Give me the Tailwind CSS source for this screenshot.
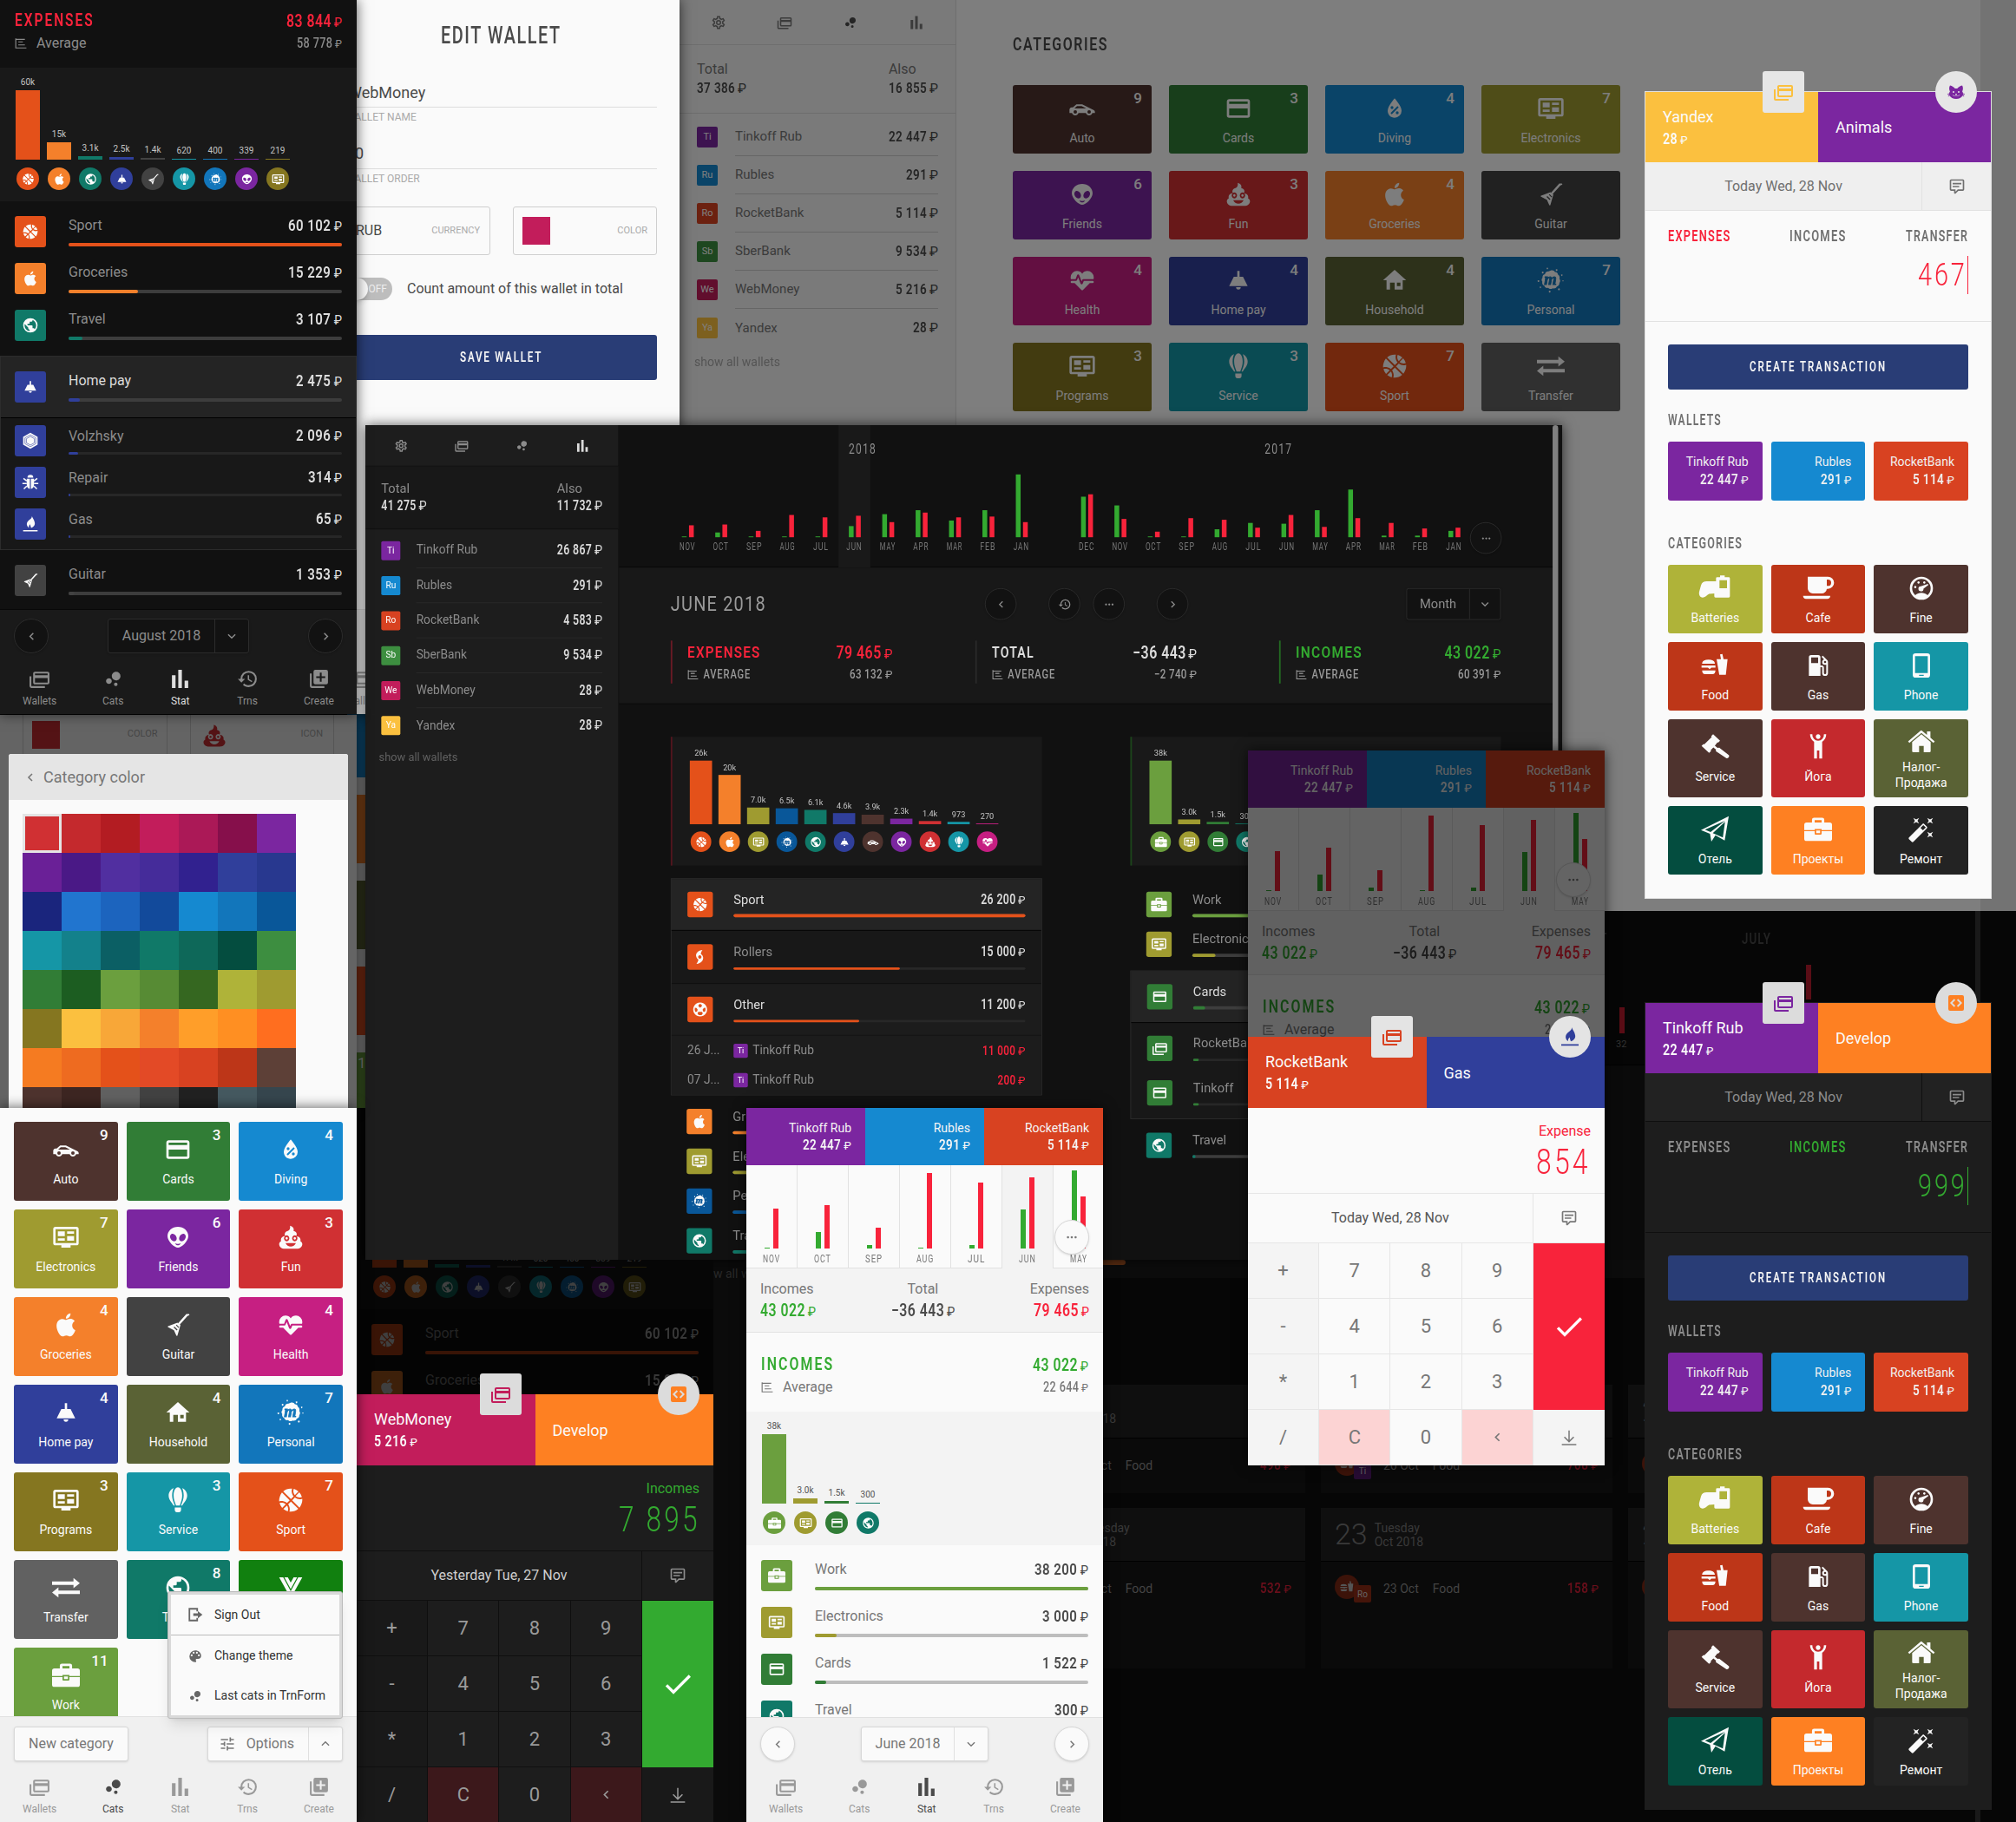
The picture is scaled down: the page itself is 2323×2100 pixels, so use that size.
<!DOCTYPE html>
<html lang="en">
<head>
<meta charset="utf-8">
<title>Finance app screens</title>
<script src="https://cdn.jsdelivr.net/npm/@tailwindcss/browser@4"></script>
</head>
<body class="bg-black font-['Roboto',sans-serif]">
<svg class="absolute size-0"><defs><mask id="mcut" maskUnits="userSpaceOnUse" x="0" y="0" width="24" height="24"><rect width="24" height="24" fill="white"/><text x="11.7" y="15.8" text-anchor="middle" font-family="Liberation Serif" font-style="italic" font-weight="bold" font-size="14" fill="black" stroke="black" stroke-width=".6">m</text></mask></defs></svg>
<div id="root" class="relative w-[2323px] h-[2100px] overflow-hidden bg-[#060606]"></div>
<script>
const p = d => `<path d="${d}"/>`;
const st = (d, w = 2) => `<path d="${d}" fill="none" stroke="currentColor" stroke-width="${w}"/>`;
// 24x24 icon set
const I = {
  gear: p('M12,8A4,4 0 0,1 16,12A4,4 0 0,1 12,16A4,4 0 0,1 8,12A4,4 0 0,1 12,8M12,10A2,2 0 0,0 10,12A2,2 0 0,0 12,14A2,2 0 0,0 14,12A2,2 0 0,0 12,10M10,22C9.75,22 9.54,21.82 9.5,21.58L9.13,18.93C8.5,18.68 7.96,18.34 7.44,17.94L4.95,18.95C4.73,19.03 4.46,18.95 4.34,18.73L2.34,15.27C2.21,15.05 2.27,14.78 2.46,14.63L4.57,12.97L4.5,12L4.57,11L2.46,9.37C2.27,9.22 2.21,8.95 2.34,8.73L4.34,5.27C4.46,5.05 4.73,4.96 4.95,5.05L7.44,6.05C7.96,5.66 8.5,5.32 9.13,5.07L9.5,2.42C9.54,2.18 9.75,2 10,2H14C14.25,2 14.46,2.18 14.5,2.42L14.87,5.07C15.5,5.32 16.04,5.66 16.56,6.05L19.05,5.05C19.27,4.96 19.54,5.05 19.66,5.27L21.66,8.73C21.79,8.95 21.73,9.22 21.54,9.37L19.43,11L19.5,12L19.43,13L21.54,14.63C21.73,14.78 21.79,15.05 21.66,15.27L19.66,18.73C19.54,18.95 19.27,19.04 19.05,18.95L16.56,17.95C16.04,18.34 15.5,18.68 14.87,18.93L14.5,21.58C14.46,21.82 14.25,22 14,22H10M11.25,4L10.88,6.61C9.68,6.86 8.62,7.5 7.85,8.39L5.44,7.35L4.69,8.65L6.8,10.2C6.4,11.37 6.4,12.64 6.8,13.8L4.68,15.36L5.43,16.66L7.86,15.62C8.63,16.5 9.68,17.14 10.87,17.38L11.24,20H12.76L13.13,17.39C14.32,17.14 15.37,16.5 16.14,15.62L18.57,16.66L19.32,15.36L17.2,13.81C17.6,12.64 17.6,11.37 17.2,10.2L19.31,8.65L18.56,7.35L16.15,8.39C15.38,7.5 14.32,6.86 13.12,6.62L12.75,4H11.25Z'),
  wallets: p('M21,8V6H7V8H21M21,16V11H7V16H21M21,4A2,2 0 0,1 23,6V16A2,2 0 0,1 21,18H7C5.89,18 5,17.1 5,16V6C5,4.89 5.89,4 7,4H21M3,20H18V22H3A2,2 0 0,1 1,20V9H3V20Z'),
  cats: p('M7.2,11.2C8.97,11.2 10.4,12.63 10.4,14.4C10.4,16.17 8.97,17.6 7.2,17.6C5.43,17.6 4,16.17 4,14.4C4,12.63 5.43,11.2 7.2,11.2M14.8,16A2,2 0 0,1 16.8,18A2,2 0 0,1 14.8,20A2,2 0 0,1 12.8,18A2,2 0 0,1 14.8,16M15.2,4A4.8,4.8 0 0,1 20,8.8C20,11.45 17.85,13.6 15.2,13.6A4.8,4.8 0 0,1 10.4,8.8C10.4,6.15 12.55,4 15.2,4Z'),
  stat: p('M3,22V8H7V22H3M10,22V2H14V22H10M17,22V14H21V22H17Z'),
  history: p('M13.5,8H12V13L16.28,15.54L17,14.33L13.5,12.25V8M13,3A9,9 0 0,0 4,12H1L4.96,16.03L9,12H6A7,7 0 0,1 13,5A7,7 0 0,1 20,12A7,7 0 0,1 13,19C11.07,19 9.32,18.21 8.06,16.94L6.64,18.36C8.27,20 10.5,21 13,21A9,9 0 0,0 22,12A9,9 0 0,0 13,3'),
  create: p('M19,11H15V15H13V11H9V9H13V5H15V9H19M20,2H8A2,2 0 0,0 6,4V16A2,2 0 0,0 8,18H20A2,2 0 0,0 22,16V4A2,2 0 0,0 20,2M4,6H2V20A2,2 0 0,0 4,22H18V20H4V6Z'),
  avg: st('M2 2V21H23M2 4H20M7 9H16M7 15H20'),
  comment: p('M9,22A1,1 0 0,1 8,21V18H4A2,2 0 0,1 2,16V4C2,2.89 2.9,2 4,2H20A2,2 0 0,1 22,4V16A2,2 0 0,1 20,18H13.9L10.2,21.71C10,21.9 9.75,22 9.5,22V22H9M10,16V19.08L13.08,16H20V4H4V16H10M6,7H18V9H6V7M6,11H15V13H6V11Z'),
  left: st('M15 6L9 12L15 18', 2.4), right: st('M9 6L15 12L9 18', 2.4), down: st('M5 9L12 16L19 9', 2.4), up: st('M5 15L12 8L19 15', 2.4),
  dots: p('M4.5 9.8a2.2 2.2 0 1 0 .01 0zM12 9.8a2.2 2.2 0 1 0 .01 0zM19.5 9.8a2.2 2.2 0 1 0 .01 0z'),
  check: p('M21,7L9,19L3.5,13.5L4.91,12.09L9,16.17L19.59,5.59L21,7Z'),
  download: st('M12 2V17M5.5 11L12 17.5L18.5 11M2 21.5H22', 1.8),
  auto: p('M12,8.5H7L4,11H3C1.89,11 1,11.89 1,13V16H3.17C3.6,17.2 4.73,18 6,18C7.27,18 8.4,17.2 8.82,16H15.17C15.6,17.2 16.73,18 18,18C19.27,18 20.4,17.2 20.82,16H23V15C23,13.89 21.97,13.53 21,13L12,8.5M5.25,12L7.5,10H11.5L15.5,12H5.25M6,13.5A1.5,1.5 0 0,1 7.5,15A1.5,1.5 0 0,1 6,16.5A1.5,1.5 0 0,1 4.5,15A1.5,1.5 0 0,1 6,13.5M18,13.5A1.5,1.5 0 0,1 19.5,15A1.5,1.5 0 0,1 18,16.5A1.5,1.5 0 0,1 16.5,15A1.5,1.5 0 0,1 18,13.5Z'),
  cards: p('M20,8H4V6H20M20,18H4V12H20M20,4H4C2.89,4 2,4.89 2,6V18A2,2 0 0,0 4,20H20A2,2 0 0,0 22,18V6C22,4.89 21.1,4 20,4Z'),
  diving: p('M12,3.25C12,3.25 6,10 6,14C6,17.32 8.69,20 12,20A6,6 0 0,0 18,14C18,10 12,3.25 12,3.25M14.47,9.97L15.53,11.03L9.53,17.03L8.47,15.97M9.75,10A1.25,1.25 0 0,1 11,11.25A1.25,1.25 0 0,1 9.75,12.5A1.25,1.25 0 0,1 8.5,11.25A1.25,1.25 0 0,1 9.75,10M14.25,14.5A1.25,1.25 0 0,1 15.5,15.75A1.25,1.25 0 0,1 14.25,17A1.25,1.25 0 0,1 13,15.75A1.25,1.25 0 0,1 14.25,14.5Z'),
  electronics: p('M21 3H3a2 2 0 0 0-2 2v12a2 2 0 0 0 2 2h5v2h8v-2h5a2 2 0 0 0 2-2V5a2 2 0 0 0-2-2zM21 17H3V5h18zM5 7h6v4H5zM13 7h6v2h-6zM13 11h6v4h-6zM5 13h6v2H5z'),
  friends: p('M12,3C16.97,3 21,6.58 21,11C21,15.42 15,21 12,21C9,21 3,15.42 3,11C3,6.58 7.03,3 12,3M10.31,10.93C9.29,9.29 7.47,8.58 6.25,9.34C5.03,10.1 4.87,12.05 5.89,13.69C6.92,15.33 8.74,16.04 9.96,15.28C11.18,14.5 11.33,12.57 10.31,10.93M13.69,10.93C12.67,12.57 12.82,14.5 14.04,15.28C15.26,16.04 17.08,15.33 18.11,13.69C19.13,12.05 18.97,10.1 17.75,9.34C16.53,8.58 14.71,9.29 13.69,10.93M12,17.75C10,17.75 9.5,17 9.5,17C9.5,17.03 10,19 12,19C14,19 14.5,17 14.5,17C14.5,17 14,17.75 12,17.75Z'),
  fun: p('M11.4 2c2 .4 3.4 1.8 3.2 3.6 0 .4-.1.7-.2 1 1.6.2 2.8 1.3 2.8 2.8 0 .6-.2 1.1-.5 1.6C19 11.100 20.500 12.500 20.500 14.300c0 .4-.1.8-.2 1.100C21.400 16 22 17 22 18c0 2.200-2 4-5 4H7c-3 0-5-1.800-5-4 0-1 .6-2 1.700-2.600-.1-.3-.2-.7-.2-1.100 0-1.800 1.500-3.200 3.700-3.400-.3-.5-.4-1-.4-1.500C6.800 7.800 8 6.800 9.500 6.500 11 6.200 11.800 4.500 11.400 2zM8.500 10.300a2.300 2.600 0 1 0 .01 0zM15.500 10.300a2.300 2.600 0 1 0 .01 0zM8.500 11.900a1 1.100 0 1 1-.01 0zM15.500 11.900a1 1.100 0 1 1-.01 0zM7.500 17c1 2 2.500 3 4.500 3s3.500-1 4.500-3z'),
  groceries: p('M18.71,19.5C17.88,20.74 17,21.95 15.66,21.97C14.32,22 13.89,21.18 12.37,21.18C10.84,21.18 10.37,21.95 9.1,22C7.79,22.05 6.8,20.68 5.96,19.47C4.25,17 2.94,12.45 4.7,9.39C5.57,7.87 7.13,6.91 8.82,6.88C10.1,6.86 11.32,7.75 12.11,7.75C12.89,7.75 14.37,6.68 15.92,6.84C16.57,6.87 18.39,7.1 19.56,8.82C19.47,8.88 17.39,10.1 17.41,12.63C17.44,15.65 20.06,16.66 20.09,16.67C20.06,16.74 19.67,18.11 18.71,19.5M13,3.5C13.73,2.67 14.94,2.04 15.94,2C16.07,3.17 15.6,4.35 14.9,5.19C14.21,6.04 13.07,6.7 11.95,6.61C11.8,5.46 12.36,4.26 13,3.5Z'),
  guitar: p('M19.300 2.600h2.300l.4.900-1.700.9-6.600 7.300.5.500-2.600 8.900c-.2.600-.8.600-1 .1l-2-4.600-5-2.500c-.5-.3-.5-.8 0-1l8-2.900.5.500zM8.300 14.200l2.700 2.700.7-.7L9 13.500zM10.300 12.400l2.200 2.200.6-.6-2.200-2.200z'),
  health: p('M7.5,4A5.5,5.5 0 0,0 2,9.5C2,10 2.09,10.5 2.22,11H6.3L7.57,7.63C7.87,6.83 9.05,6.75 9.43,7.63L11.5,13L12.09,11.58C12.22,11.25 12.57,11 13,11H21.78C21.91,10.5 22,10 22,9.5A5.5,5.5 0 0,0 16.5,4C14.64,4 13,4.93 12,6.34C11,4.93 9.36,4 7.5,4V4M3,12.5A1,1 0 0,0 2,13.5A1,1 0 0,0 3,14.5H5.44L11,20C12,20.9 12,20.9 13,20L18.56,14.5H21A1,1 0 0,0 22,13.5A1,1 0 0,0 21,12.5H13.4L12.47,14.8C12.07,15.81 10.92,15.67 10.55,14.83L8.5,9.5L7.54,11.83C7.39,12.21 7.05,12.5 6.6,12.5H3Z'),
  homepay: p('M8,9H11V4H13V9H16L20,17H4L8,9M14,18A2,2 0 0,1 12,20A2,2 0 0,1 10,18H14Z'),
  household: p('M12 3L2 12H5V20H8V14H12V20H19V12H22zM14 14h3v3h-3z'),
  personal: `<g mask="url(#mcut)"><path d="M12 3.500c1.500-.6 3 .1 3.600 1.300 1.500 0 2.700 1.200 2.700 2.600 1.200.7 1.600 2.100 1.100 3.300.9 1.100.9 2.600 0 3.600.2 1.500-.8 2.800-2.200 3.100-.6 1.400-2.200 2-3.600 1.500-1.200 1-3 .8-3.900-.3-1.500.4-3-.5-3.400-1.900C4.900 16.200 4.200 14.700 4.700 13.400c-.9-1-.8-2.600.1-3.500-.2-1.500.7-2.900 2.100-3.200C7.300 5.200 8.700 4.200 10.200 4.400c.5-.5 1.100-.8 1.800-.9z"/></g><path d="M5 4.500a.8.8 0 1 0 .01 0zM9 1.200a.6.6 0 1 0 .01 0zM17 2.500a.7.7 0 1 0 .01 0zM21.500 7a.6.6 0 1 0 .01 0zM22.500 12a.5.500 0 1 0 .01 0zM1.300 12a.7.7 0 1 0 .01 0zM3 17.500a.6.6 0 1 0 .01 0zM11 21a.8.8 0 1 0 .01 0zM19 19a.8.8 0 1 0 .01 0z"/>`,
  service: p('M8.300 1.600C5.800 2.600 4 5 4 8c0 3.500 2.600 6 4.300 8.600h1C7.800 13 7 10.500 7 8c0-2.600.5-4.800 1.300-6.400zM15.700 1.600C18.200 2.600 20 5 20 8c0 3.500-2.600 6-4.300 8.600h-1C16.200 13 17 10.500 17 8c0-2.600-.5-4.800-1.300-6.400zM12 1c2.300 0 3.700 3.300 3.700 7 0 3-1 5.600-2.100 8.600h-3.200C9.300 13.600 8.300 11 8.300 8c0-3.700 1.400-7 3.700-7zM9.300 18.300h5.400v2.200c0 1.100-.7 2-1.900 2h-1.600c-1.200 0-1.900-.9-1.900-2z'),
  sport: p('M2.34,14.63C2.94,14.41 3.56,14.3 4.22,14.3C5.56,14.3 6.73,14.72 7.73,15.56L4.59,18.7C3.53,17.5 2.78,16.13 2.34,14.63M15.56,9.8C17.53,11.27 19.66,11.63 21.94,10.88C21.97,11.09 22,11.47 22,12C22,13.03 21.75,14.18 21.28,15.45C20.81,16.72 20.23,17.73 19.55,18.5L13.22,12.19L15.56,9.8M8.77,16.64C9.83,18.17 10.05,19.84 9.42,21.66C8,21.25 6.73,20.61 5.61,19.73L8.77,16.64M12.19,13.22L18.5,19.55C16.33,21.45 13.78,22.25 10.88,21.94C11.09,21.28 11.2,20.56 11.2,19.78C11.2,19.16 11.06,18.43 10.78,17.6C10.5,16.77 10.17,16.09 9.8,15.56L12.19,13.22M8.81,14.5C7.88,13.67 6.8,13.15 5.58,12.91C4.36,12.68 3.19,12.75 2.06,13.13C2.03,12.91 2,12.53 2,12C2,10.97 2.25,9.82 2.72,8.55C3.19,7.28 3.77,6.27 4.45,5.5L11.11,12.19L8.81,14.5M15.56,7.73C14.22,6.08 13.91,4.28 14.63,2.34C15.25,2.5 15.96,2.8 16.76,3.26C17.55,3.71 18.2,4.16 18.7,4.59L15.56,7.73M21.66,9.38C21.06,9.59 20.44,9.7 19.78,9.7C18.44,9.7 17.27,9.28 16.27,8.44L19.41,5.3C20.44,6.53 21.19,7.89 21.66,9.38M12.19,11.11L5.5,4.45C7.67,2.55 10.22,1.75 13.13,2.06C12.91,2.72 12.8,3.44 12.8,4.22C12.8,4.94 12.96,5.75 13.29,6.66C13.62,7.56 14,8.28 14.5,8.81L12.19,11.11Z'),
  transfer: p('M0 6.500H18.500V3.500L24 8L18.500 12.300V9.500H0zM24 14.500H5.500V11.700L0 16.200L5.500 20.500V17.500H24z'),
  travel: p('M17.9,17.39C17.64,16.59 16.89,16 16,16H15V13A1,1 0 0,0 14,12H8V10H10A1,1 0 0,0 11,9V7H13A2,2 0 0,0 15,5V4.59C17.93,5.77 20,8.64 20,12C20,14.08 19.2,15.97 17.9,17.39M11,19.93C7.05,19.44 4,16.08 4,12C4,11.38 4.08,10.78 4.21,10.21L9,15V16A2,2 0 0,0 11,18M12,2A10,10 0 0,0 2,12A10,10 0 0,0 12,22A10,10 0 0,0 22,12A10,10 0 0,0 12,2Z'),
  work: p('M8.500 1.800h7a1.800 1.800 0 0 1 1.800 1.800V6H22a2 2 0 0 1 2 2v4.500H15v-.8H9v.8H0V8a2 2 0 0 1 2-2h4.700V3.600A1.800 1.800 0 0 1 8.500 1.800zM9 6h6V4H9zM0 13.500h9v2.300c0 .4.3.7.7.7h4.600c.4 0 .7-.3.7-.7v-2.300h9V20a2 2 0 0 1-2 2H2a2 2 0 0 1-2-2zM10.300 13h3.400v2.200h-3.400z'),
  vue: p('M2,3H5.5L12,15L18.5,3H22L12,21L2,3M6.5,3H9.5L12,7.58L14.5,3H17.5L12,13.08L6.5,3Z'),
  volzhsky: p('M12 1L22 6.500V17.500L12 23L2 17.500V6.500z') + `<g fill="none" stroke="#303f9b" stroke-width=".7"><path d="M12 3.800L19.500 8V16L12 20.200L4.500 16V8zM12 6L17.500 9.200V14.800L12 18L6.500 14.800V9.200z"/></g>`,
  bug: p('M8 5.500a4 4 0 0 1 8 0zM7 7h4.300v14C8.800 21 7 18.500 7 16zM12.700 7H17v9c0 2.500-1.800 5-4.300 5z') + st('M7 10L2.500 6.500M17 10L21.500 6.500M7 13.500H1M17 13.500H23M7 17L3 21M17 17L21 21', 1.8),
  fire: p('M14 1c1 3.500-5 5.500-6.500 9-1.200 3.200.5 6 2.500 7-.5-2 .5-3.500 1.800-4.600 0 1.800.7 2.600 1.200 4.900 3.600-1.100 5.800-4 5-7.300C17.400 6.500 15.500 4.500 14 1zM2 20.500H22V22.300H2z'),
  rollers: p('M15.500 1.500C9 2 5 6.500 6 11c.5 2.500 2 4 3.500 5-.5 2.500-1.500 4.500-3 6.500 7-1 10.500-5.500 10-10-.3-2.500-2-4-3.500-5 .3-2.500 1-4 2.500-6zM11.500 9.500a2.500 2.500 0 1 1-.01 0z'),
  soccer: p('M12 1.500a10.500 10.500 0 1 0 .01 0zM12 3.500L14.500 5V7.500L12 9.300L9.500 7.500V5zM4 9.500L6.500 9.800L8.300 12.200L7.300 15.200L4.800 15.500A8.500 8.500 0 0 1 4 9.500zM20 9.500L17.500 9.800L15.700 12.200L16.700 15.200L19.200 15.500A8.500 8.500 0 0 0 20 9.500zM9.200 15.500H14.800L16 18L14.500 20.200A8.800 8.800 0 0 1 9.500 20.200L8 18z'),
  cat: p('M12,8L10.67,8.09C9.81,7.07 7.4,4.5 5,4.5C5,4.5 3.03,7.46 4.96,11.41C4.41,12.24 4.07,12.67 4,13.66L2.07,13.95L2.28,14.93L4.04,14.67L4.18,15.38L2.61,16.32L3.08,17.21L4.53,16.32C5.68,18.76 8.59,20 12,20C15.41,20 18.32,18.76 19.47,16.32L20.92,17.21L21.39,16.32L19.82,15.38L19.96,14.67L21.72,14.93L21.93,13.95L20,13.66C19.93,12.67 19.59,12.24 19.04,11.41C20.97,7.46 19,4.5 19,4.5C16.6,4.5 14.19,7.07 13.33,8.09L12,8M9,11A1,1 0 0,1 10,12A1,1 0 0,1 9,13A1,1 0 0,1 8,12A1,1 0 0,1 9,11M15,11A1,1 0 0,1 16,12A1,1 0 0,1 15,13A1,1 0 0,1 14,12A1,1 0 0,1 15,11M11,14H13L12.3,15.39C12.5,16.03 13.06,16.5 13.75,16.5A1.5,1.5 0 0,0 15.25,15H15.75A2,2 0 0,1 13.75,17C13,17 12.35,16.59 12,16V16H12C11.65,16.59 11,17 10.25,17A2,2 0 0,1 8.25,15H8.75A1.5,1.5 0 0,0 10.25,16.5C10.94,16.5 11.5,16.03 11.7,15.39L11,14Z'),
  develop: p('M5 3h14a2 2 0 0 1 2 2v14a2 2 0 0 1-2 2H5a2 2 0 0 1-2-2V5a2 2 0 0 1 2-2zM9.700 7.300L5 12L9.700 16.700L11.100 15.300L7.800 12L11.100 8.700zM14.300 7.300L12.900 8.700L16.200 12L12.900 15.300L14.300 16.700L19 12z'),
  batteries: p('M14.500 2.500h2V1h4v1.500H24a1 1 0 0 1 1 1V19a1 1 0 0 1-1 1H12.500a1 1 0 0 1-1-1v-2.500l-4.500.3C5 18 3.500 20 1.500 20-1 20-2 17.500-1.500 15L0 9.500C.7 7 2.500 6 5 6h8V3.500a1 1 0 0 1 1-1zM16 5h6.500v7H16z'),
  cafe: p('M3 2h17.500a5 5 0 0 1 0 10.500H19.500A4.500 4.500 0 0 1 15 16.500H7.500A4.500 4.500 0 0 1 3 12zM19.500 4.500v5.500h1a2.700 2.700 0 0 0 0-5.500zM-1 18.500H22.500c0 1.500-1 2.700-2.500 2.700H1.500C0 21.200-1 20-1 18.500z'),
  fine: p('M12,2A10,10 0 0,0 2,12A10,10 0 0,0 12,22A10,10 0 0,0 22,12A10,10 0 0,0 12,2M12,4A8,8 0 0,1 20,12C20,14.4 19,16.5 17.3,18C15.9,16.7 14,16 12,16C10,16 8.2,16.7 6.7,18C5,16.5 4,14.4 4,12A8,8 0 0,1 12,4') + p('M11.500 10.300L17.600 8.200L18 9.200L13.800 12.300A2.200 2.200 0 1 1 11.500 10.300zM9.500 6a1 1 0 1 0 .01 0zM14.500 6a1 1 0 1 0 .01 0zM6.700 10a1 1 0 1 0 .01 0z'),
  food: p('M1 10.500c0-2.200 2-3.500 5.500-3.500S12 8.300 12 10.500zM.5 12h12v1.800H9l-1.500 1.300L6 13.800H.5zM1 16.300h11.500c0 2-1 3.200-2.500 3.200H3.500C2 19.500 1 18.300 1 16.300zM13.500 6.500h3.800L16.500 2.500l2-.5 1 4.500H23L21.500 20h-5.700z'),
  gas: p('M18,10A1,1 0 0,1 17,9A1,1 0 0,1 18,8A1,1 0 0,1 19,9A1,1 0 0,1 18,10M12,10H6V5H12M19.77,7.23L19.78,7.22L16.06,3.5L15,4.56L17.11,6.67C16.17,7 15.5,7.93 15.5,9A2.5,2.5 0 0,0 18,11.5C18.36,11.5 18.69,11.42 19,11.29V18.5A1,1 0 0,1 18,19.5A1,1 0 0,1 17,18.5V14A2,2 0 0,0 15,12H14V5A2,2 0 0,0 12,3H6A2,2 0 0,0 4,5V21H14V13.5H15.5V18.5A2.5,2.5 0 0,0 18,21A2.5,2.5 0 0,0 20.5,18.5V9C20.5,8.31 20.22,7.68 19.77,7.23Z'),
  phone: p('M7 1.500h10a2.500 2.500 0 0 1 2.500 2.500V20A2.500 2.500 0 0 1 17 22.500H7A2.500 2.500 0 0 1 4.500 20V4A2.500 2.500 0 0 1 7 1.500zM6.500 4V18.500H17.500V4zM10 20h4v1h-4z'),
  gavel: p('M10.500 1L16.500 6.500L14.800 8.200L14.300 7.800L12 10.800L14.300 12.800L15.800 12.500L24 19C25 20 23.500 22.500 21.800 21.500L12.800 15.500L13 14.300L10.700 12.400L8.300 14.800L8.800 15.300L7 17L.5 11L2.200 9.300L2.800 9.800L9.300 3.300L8.800 2.700z'),
  yoga: p('M5,1C5,3.7 6.3,6.160 8.500,7.500V22H11V15H13V22H15.500V7.500C17.700,6.160 19,3.7 19,1H17A5,5 0 0,1 12,6.500A5,5 0 0,1 7,1M12,1C10.89,1 10,1.89 10,3C10,4.11 10.89,5 12,5C13.11,5 14,4.11 14,3C14,1.89 13.11,1 12,1Z'),
  house: p('M12 5.500L20 12.200V20a1 1 0 0 1-1 1h-5v-5.500h-4V21H5a1 1 0 0 1-1-1v-7.800zM12 2L16.800 6V3h3v5.500L23.500 11.600L22.400 13L12 4.300L1.600 13L.5 11.600L11 2.700z'),
  plane: p('M24 .5L20.500 21.500L12.500 17L9 22.500L7.800 15.800L0 12.500zM20.800 4.500L3.500 12.200L8.300 14.300zM20.800 5.500L10.200 15.200L18.900 19z'),
  wand: p('M7.5,5.6L5,7L6.4,4.5L5,2L7.5,3.4L10,2L8.6,4.5L10,7L7.5,5.6M19.5,15.4L22,14L20.6,16.5L22,19L19.5,17.6L17,19L18.4,16.5L17,14L19.500,15.400M22,2L20.600,4.500L22,7L19.500,5.600L17,7L18.400,4.500L17,2L19.500,3.400L22,2M13.340,12.780L15.780,10.340L13.660,8.220L11.220,10.660L13.340,12.780M14.370,7.290L16.710,9.630C17.100,10 17.100,10.650 16.710,11.040L5.040,22.710C4.650,23.100 4,23.100 3.630,22.710L1.290,20.370C.9,20 .9,19.350 1.290,18.960L12.960,7.290C13.350,6.900 14,6.900 14.370,7.290Z'),
  palette: p('M17.5,12A1.5,1.5 0 0,1 16,10.5A1.5,1.5 0 0,1 17.5,9A1.5,1.5 0 0,1 19,10.5A1.5,1.5 0 0,1 17.5,12M14.5,8A1.5,1.5 0 0,1 13,6.5A1.5,1.5 0 0,1 14.5,5A1.5,1.5 0 0,1 16,6.5A1.5,1.5 0 0,1 14.5,8M9.5,8A1.5,1.5 0 0,1 8,6.5A1.5,1.5 0 0,1 9.5,5A1.5,1.5 0 0,1 11,6.5A1.5,1.5 0 0,1 9.5,8M6.5,12A1.5,1.5 0 0,1 5,10.5A1.5,1.5 0 0,1 6.5,9A1.5,1.5 0 0,1 8,10.5A1.5,1.5 0 0,1 6.5,12M12,3A9,9 0 0,0 3,12A9,9 0 0,0 12,21A1.5,1.5 0 0,0 13.5,19.5C13.5,19.11 13.35,18.76 13.11,18.5C12.88,18.23 12.73,17.88 12.73,17.5A1.5,1.5 0 0,1 14.23,16H16A5,5 0 0,0 21,11C21,6.58 16.97,3 12,3Z'),
  tune: p('M3,17V19H9V17H3M3,5V7H13V5H3M13,21V19H21V17H13V15H11V21H13M7,9V11H3V13H7V15H9V9H7M21,13V11H11V13H21M15,9H17V7H21V5H17V3H15V9Z'),
  logout: st('M15 7V3H3V21H15V17', 2.4) + p('M9 10H16V6.500L23 12L16 17.500V14H9z'),
};
const ic = (n, c = 'size-8') => `<svg class="${c} shrink-0 overflow-visible" viewBox="0 0 24 24" fill="currentColor" fill-rule="evenodd">${I[n]}</svg>`;
// Narrow display text: squeezed to a ratio (default) or to an explicit width in px.
const U = (t, c = '', w = 0) => `<span class="nar inline-block whitespace-pre origin-left ${c.includes('font-') ? '' : 'font-semibold'} ${c}" data-w="${w}">${t}</span>`;
const M = (v, c = 'text-[19px]', r = 'text-[14px]') => `<span class="inline-flex items-baseline gap-[3px] whitespace-nowrap">${U(v, c + ' tracking-[.03em]')}<span class="${r}">₽</span></span>`;

const C = { sport: 'bg-[#e4511a]', groceries: 'bg-[#f4802b]', travel: 'bg-[#107968]', homepay: 'bg-[#303f9b]', guitar: 'bg-[#424242]', service: 'bg-[#1596a6]', personal: 'bg-[#1276bb]', personal2: 'bg-[#095799]', friends: 'bg-[#7b26a0]', programs: 'bg-[#857620]', electronics: 'bg-[#9f9b30]', auto: 'bg-[#4e332e]', fun: 'bg-[#d03033]', health: 'bg-[#c61f82]', work: 'bg-[#6b9f3e]', cards: 'bg-[#317d36]', diving: 'bg-[#1589d0]', household: 'bg-[#5a6235]', transfer: 'bg-[#616161]', vue: 'bg-[#11800f]', amber: 'bg-[#fbc03f]', orange: 'bg-[#fe8022]', tomato: 'bg-[#d84221]', pink: 'bg-[#c21d5b]', lime: 'bg-[#afb339]', brick: 'bg-[#bd3618]', red: 'bg-[#c4292d]', deep: 'bg-[#044d3f]', ink: 'bg-[#232323]', green: 'bg-[#3d8e40]' };
const DK = { bg: 'bg-[#111111]', alt: 'bg-[#191919]', mut: 'text-[#8c8c8c]', txt: 'text-[#dcdcdc]', track: 'bg-[#3d3d3d]', track2: 'bg-[#272727]', bar: 'bg-[#1a1a1a]', line: 'border-[#080808]', btn: 'bg-[#121212] border-[#2c2c2c]', nav: 'text-[#8c8c8c]', navOn: 'text-[#dedede]', line2: 'border-[#2c2c2c]', lab: 'text-[#c4c4c4]' };
const LT = { bg: 'bg-[#fafafa]', alt: 'bg-[#f3f3f3]', mut: 'text-[#777777]', txt: 'text-[#4a4a4a]', track: 'bg-[#bdbdbd]', track2: 'bg-[#dddddd]', bar: 'bg-[#f0f0f0]', line: 'border-[#e0e0e0]', btn: 'bg-[#fafafa] border-[#d8d8d8]', nav: 'text-[#999999]', navOn: 'text-[#4a4a4a]', line2: 'border-[#e0e0e0]', lab: 'text-[#555555]' };

const nav = (t, on) => `<div class="flex justify-between px-[26px] pt-[17px]">${[['wallets', 'Wallets'], ['cats', 'Cats'], ['stat', 'Stat'], ['history', 'Trns'], ['create', 'Create']].map(([i, l]) => `<div class="flex flex-col items-center ${on === l ? t.navOn : t.nav}">${ic(i, 'size-[25px]')}<div class="mt-1 text-[12px] leading-[18px]">${l}</div></div>`).join('')}</div>`;
const circ = (t, i, s = 'size-[15px]') => `<div class="flex size-10 items-center justify-center rounded-full border shadow-sm ${t.btn} ${t.mut}">${ic(i, s)}</div>`;
const select = (t, l, i = 'down') => `<div class="flex h-10 rounded-[3px] border shadow-sm ${t.btn} ${t.mut}"><div class="flex items-center px-4 text-[16px]">${l}</div><div class="flex w-[39px] items-center justify-center border-l ${t.line2}">${ic(i, 'size-[14px]')}</div></div>`;
const bottomBar = (t, mid, on) => `<div class="absolute inset-x-0 bottom-0 h-[121px] border-t pt-[10px] ${t.bar} ${t.line}"><div class="flex h-10 justify-between px-4">${mid}</div>${nav(t, on)}</div>`;

// Category bar chart: [label, height, category, icon]
const chart = (t, bars, pad = 'h-[154px] px-[18px]', top = 'h-[106px]') => `<div class="${pad} ${t.alt}"><div class="flex items-end gap-2 ${top}">${bars.map(([l, h, c]) => `<div class="flex w-7 flex-col items-center"><div class="text-[10px] leading-[19px] ${t.lab}">${l}</div><div class="w-7 ${C[c]}" style="height:${h}px"></div></div>`).join('')}</div><div class="flex gap-2 pt-[9px]">${bars.map(([, , c, i]) => `<div class="flex w-7 justify-center"><div class="flex size-[26px] items-center justify-center rounded-full text-white ${C[c]}">${ic(i || c, 'size-[15px]')}</div></div>`).join('')}</div></div>`;
// Category row: name, sum, percent, category, icon
const row = (t, [n, v, pc, c, i], o = {}) => `<div class="flex items-center ${o.h || 'h-[54px] px-[17px]'}"><div class="flex items-center justify-center rounded-[3px] text-[#fafafa] ${o.box || 'size-9 mr-[26px]'} ${C[c]}">${ic(i || c, 'size-5')}</div><div class="flex flex-1 flex-col justify-between ${o.body || 'h-[34px]'}"><div class="flex h-5 items-center justify-between"><span class="text-[16px] ${o.on ? t.txt : t.mut}">${n}</span><span class="${t.txt}">${M(v, o.num || 'text-[19px]', o.rub || 'text-[14px]')}</span></div><div class="w-full rounded-full ${o.thin ? 'h-[3px] ' + t.track2 : 'h-1 ' + t.track}"><div class="h-full rounded-full ${C[c]}" style="width:${pc}%"></div></div></div></div>`;
const sect = (t, title, w, col, sum, avg) => `<div class="h-[78px] px-[17px] pt-[11px] ${t.bg}"><div class="flex h-[26px] items-center justify-between ${col}">${U(title, 'text-[21px] tracking-[.13em] font-semibold', w + 2)}${M(sum, 'text-[20px]')}</div><div class="flex h-[26px] items-center justify-between ${t.mut}"><div class="flex items-center gap-[11px] text-[16px]">${ic('avg', 'size-[14px]')}Average</div>${M(avg, 'text-[16px] font-medium', 'text-[12px]')}</div></div>`;

const RED = 'text-[#f8233b]', GRN = 'text-[#33aa30]';
const statDark = () => `<div class="relative h-[823px] w-[411px] overflow-hidden ${DK.bg}">
${sect(DK, 'EXPENSES', 90, RED, '83 844', '58 778')}
${chart(DK, [['60k', 80, 'sport'], ['15k', 20, 'groceries'], ['3.1k', 4, 'travel'], ['2.5k', 3, 'homepay'], ['1.4k', 2, 'guitar'], ['620', 1, 'service'], ['400', 1, 'personal'], ['339', 1, 'friends'], ['219', 1, 'programs', 'electronics']])}
<div class="pt-2">${row(DK, ['Sport', '60 102', 100, 'sport'])}${row(DK, ['Groceries', '15 229', 25.4, 'groceries'])}${row(DK, ['Travel', '3 107', 5, 'travel'])}</div>
<div class="mt-2 border bg-[#181818] border-[#2c2c2c]"><div class="border-b border-black bg-[#242424] py-2">${row(DK, ['Home pay', '2 475', 4.1, 'homepay'], { on: 1, h: 'h-[54px] px-4' })}</div>
<div class="pt-[2px] pb-[5px]">${[['Volzhsky', '2 096', 3.5, 'homepay', 'volzhsky'], ['Repair', '314', .6, 'homepay', 'bug'], ['Gas', '65', .6, 'homepay', 'fire']].map(r => row(DK, r, { thin: 1, h: 'h-12 px-4', body: 'h-[31px]' })).join('')}</div></div>
<div class="pt-2">${row(DK, ['Guitar', '1 353', 2.2, 'guitar'])}</div>
${bottomBar(DK, circ(DK, 'left') + select(DK, 'August 2018') + circ(DK, 'right'), 'Stat')}</div>`;

const WAL = [['Tinkoff Rub', '22 447', 'friends'], ['Rubles', '291', 'diving'], ['RocketBank', '5 114', 'tomato']];
const statLight = () => `<div class="relative h-[823px] w-[411px] overflow-hidden ${LT.bg}">
<div class="grid h-[66px] grid-cols-3">${WAL.map(([n, v, c]) => `<div class="flex flex-col items-end pt-[13px] pr-4 text-[#f5f5f5] ${C[c]}"><div class="h-5 text-[14px] leading-5">${n}</div><div class="flex h-5 items-center">${M(v, 'text-[17px]', 'text-[13px]')}</div></div>`).join('')}</div>
<div class="relative flex h-[119px]">${[['NOV', 1, 46], ['OCT', 19, 50], ['SEP', 4, 24], ['AUG', 1, 87], ['JUL', 4, 76], ['JUN', 45, 82], ['MAY', 90, 60]].map(([m, g, r]) => `<div class="flex w-[59px] shrink-0 flex-col items-center ${m === 'JUN' ? 'bg-[#f3f3f3]' : 'border-b'} border-r border-[#e2e2e2]"><div class="flex h-24 shrink-0 items-end gap-1"><div class="w-1.5 bg-[#33aa30]" style="height:${g}px"></div><div class="w-1.5 bg-[#f8233b]" style="height:${r}px"></div></div><div class="mt-1 flex h-4 items-center text-[#777]">${U(m, 'text-[12px] leading-4 font-normal tracking-[.1em]', 20)}</div></div>`).join('')}
<div class="absolute top-[63px] left-[355px]">${circ(LT, 'dots', 'size-[14px]')}</div></div>
<div class="flex h-[74px] justify-between border-b px-4 pt-[12px] border-[#e2e2e2] ${LT.alt}">${[['Incomes', '43 022', GRN, 'items-start'], ['Total', '−36 443', 'text-[#4a4a4a]', 'items-center'], ['Expenses', '79 465', RED, 'items-end']].map(([l, v, c, a]) => `<div class="flex flex-col ${a}"><div class="h-6 text-[16px] text-[#777]">${l}</div><div class="flex h-6 items-center ${c}">${M(v, 'text-[20px]')}</div></div>`).join('')}</div>
<div class="pt-[13px]">${sect(LT, 'INCOMES', 82, GRN, '43 022', '22 644')}</div>
${chart(LT, [['38k', 80, 'work'], ['3.0k', 6, 'electronics'], ['1.5k', 3, 'cards'], ['300', 1, 'travel']])}
<div class="pt-2">${[['Work', '38 200', 100, 'work'], ['Electronics', '3 000', 8, 'electronics'], ['Cards', '1 522', 4, 'cards'], ['Travel', '300', 1, 'travel']].map(r => row(LT, r)).join('')}</div>
${bottomBar(LT, circ(LT, 'left') + select(LT, 'June 2018') + circ(LT, 'right'), 'Stat')}</div>`;

// Category tile: name, category, icon, count
const tile = ([n, c, i, b], h, k = '') => `<div class="relative flex flex-col items-center rounded-[3px] text-[#fafafa] ${h} ${C[c]}">${ic(i || c, 'size-8')}<div class="mt-[9px] text-center text-[14px] leading-[18px] ${k}">${n}</div>${b ? `<div class="absolute top-1.5 right-[11px] text-[17px] leading-[18px] font-medium">${b}</div>` : ''}</div>`;
const CATS = [['Auto', 'auto', '', 9], ['Cards', 'cards', '', 3], ['Diving', 'diving', '', 4], ['Electronics', 'electronics', '', 7], ['Friends', 'friends', '', 6], ['Fun', 'fun', '', 3], ['Groceries', 'groceries', '', 4], ['Guitar', 'guitar'], ['Health', 'health', '', 4], ['Home pay', 'homepay', '', 4], ['Household', 'household', '', 4], ['Personal', 'personal', '', 7], ['Programs', 'programs', 'electronics', 3], ['Service', 'service', '', 3], ['Sport', 'sport', '', 7], ['Transfer', 'transfer']];

const sidebar = (t, o) => `<div class="w-[319px] shrink-0 border-r ${o.side} ${o.ln}"><div class="flex h-[52px] items-center border-b px-[7px] ${o.ln}">${['gear', 'wallets', 'cats', 'stat'].map(i => `<div class="flex w-[76px] shrink-0 justify-center ${i === o.on ? t.txt : t.mut}">${ic(i, 'size-[18px]')}</div>`).join('')}</div>
<div class="flex h-[79px] justify-between border-b px-5 pt-[17px] ${o.tot} ${o.ln}">${[['Total', o.a], ['Also', o.b]].map(([l, v]) => `<div class="flex flex-col items-start"><div class="h-[22px] text-[16px] leading-[22px] ${t.mut}">${l}</div><div class="flex h-[22px] items-center ${t.txt}">${M(v, 'text-[17px]', 'text-[15px]')}</div></div>`).join('')}</div>
<div class="px-5 pt-[5px]">${o.list.map(([s, n, v, c], k) => `<div class="flex h-11 items-center gap-5"><div class="flex size-6 items-center justify-center rounded-[2px] text-[11px] text-white ${C[c]}">${s}</div><div class="flex h-full flex-1 items-center justify-between ${k < 5 ? 'border-b ' + o.ln2 : ''}"><span class="text-[15px] ${t.mut}">${n}</span><span class="${t.txt}">${M(v, 'text-[17px]', 'text-[15px]')}</span></div></div>`).join('')}</div><div class="pt-[6px] pl-[17px] text-[14px] leading-[22px] opacity-60 ${t.mut}">show all wallets</div></div>`;
const wl = v => [['Ti', 'Tinkoff Rub', v[0], 'friends'], ['Ru', 'Rubles', v[1], 'diving'], ['Ro', 'RocketBank', v[2], 'tomato'], ['Sb', 'SberBank', v[3], 'green'], ['We', 'WebMoney', v[4], 'pink'], ['Ya', 'Yandex', v[5], 'amber']];

const desktopLight = () => `<div class="relative flex h-[1050px] w-[1540px] bg-[#fdfdfd]">
${sidebar(LT, { side: 'bg-[#f4f4f4]', tot: '', ln: 'border-[#dddddd]', ln2: 'border-[#cccccc]', on: 'cats', a: '37 386', b: '16 855', list: wl(['22 447', '291', '5 114', '9 534', '5 216', '28']) })}
<div class="pt-[38px] pl-[65px]"><div class="h-[60px] text-[#4a4a4a]">${U('CATEGORIES', 'text-[21px] leading-[26px] tracking-[.1em]', 110)}</div><div class="grid grid-cols-[repeat(4,160px)] gap-5">${CATS.map(c => tile(c, 'h-[79px] pt-[11px]')).join('')}</div></div>
<div class="absolute inset-y-0 right-0 w-[41px] bg-[#e6e6e6]"></div><div class="absolute inset-0 bg-black/50"></div></div>`;

const editWallet = () => `<div class="relative h-[823px] w-[411px] overflow-hidden bg-[#fafafa] px-[26px] text-[#4a4a4a]">
<div class="flex h-[57px] justify-center pt-[25px]">${U('EDIT WALLET', 'text-[27px] leading-8 tracking-[.08em] font-medium', 139)}</div>
<div class="mt-[37px] h-[30px] border-b border-[#dddddd] pl-[3px] text-[18px] leading-[26px]">WebMoney</div><div class="mt-[3px] text-[12px] leading-4 text-[#aaa]">WALLET NAME</div>
<div class="mt-[21px] h-[31px] border-b border-[#dddddd] pl-[1px] text-[18px] leading-[26px]">10</div><div class="mt-[3px] text-[12px] leading-4 text-[#aaa]">WALLET ORDER</div>
<div class="mt-6 flex justify-between"><div class="flex h-14 w-[167px] items-center justify-between rounded-[3px] border border-[#cfcfcf] pr-[11px] pl-[11px]"><span class="text-[16px]">RUB</span><span class="text-[11px] text-[#aaa]">CURRENCY</span></div><div class="flex h-14 w-[166px] items-center justify-between rounded-[3px] border border-[#cfcfcf] px-[10px]"><span class="size-8 bg-[#c21d5b]"></span><span class="text-[11px] text-[#aaa]">COLOR</span></div></div>
<div class="mt-[26px] flex items-center"><div class="flex h-[26px] w-[54px] items-center justify-end rounded-full bg-[#bdbdbd] pr-1.5 text-[12px] text-[#eee]"><div class="absolute left-[26px] size-[26px] rounded-full bg-[#fafafa] shadow-md"></div>OFF</div><div class="ml-[17px] text-[16px]">Count amount of this wallet in total</div></div>
<div class="mt-10 flex h-[52px] items-center justify-center rounded-[3px] bg-[#293d76] text-[#f5f5f5]">${U('SAVE WALLET', 'text-[16px] tracking-[.15em]', 95)}</div>
${bottomBar(LT, '', '')}</div>`;

const SW = ['#d03033', '#c4292d', '#b31c22', '#c21d5b', '#ab1957', '#860f4b', '#7b26a0', '#6a2097', '#4a1986', '#512fa0', '#452c9a', '#31218f', '#303f9b', '#28388f', '#1a257d', '#2175cf', '#1c64be', '#124a9b', '#1589d0', '#1276bb', '#095799', '#1596a6', '#13818b', '#0b5f64', '#107968', '#0e6859', '#044d3f', '#3d8e40', '#317d36', '#1c5d21', '#6b9f3e', '#578b34', '#356720', '#afb339', '#9f9b30', '#857620', '#fbc03f', '#f8a738', '#f4802b', '#ff9e29', '#ff8f22', '#ff6e1f', '#f57b21', '#ee6b20', '#e4511a', '#e34a26', '#d84221', '#bd3618', '#5d4037', '#4e332e', '#3d2622', '#616161', '#424242', '#212121', '#455960', '#36464e'];
const colorPicker = () => `<div class="relative h-[453px] w-[411px] overflow-hidden bg-[#646464]">
<div class="flex h-[45px] gap-[26px] overflow-hidden px-[26px]"><div class="flex h-14 w-[167px] justify-between border-x border-[#555] px-[10px] pt-[7px]"><div class="size-8 bg-[#541315]"></div><div class="pt-[7px] text-[11px] text-[#444]">COLOR</div></div><div class="flex h-14 w-[167px] justify-between border-x border-[#555] px-[12px] pt-[7px]"><div class="pt-0.5 text-[#541315]">${ic('fun', 'size-[30px]')}</div><div class="pt-[7px] text-[11px] text-[#444]">ICON</div></div></div>
<div class="mx-[10px] h-[420px] rounded-t-[3px] bg-[#fafafa]"><div class="flex h-[53px] items-center rounded-t-[3px] bg-[#e5e5e5] pl-[17px] text-[18px] text-[#777]">${ic('left', 'size-4')}<span class="ml-[7px]">Category color</span></div>
<div class="grid grid-cols-[repeat(7,45px)] pt-4 pl-4">${SW.map((c, k) => `<div class="h-[45px] ${k ? '' : 'border-[3px] border-[#e4e4e4]'}" style="background:${c}"></div>`).join('')}</div></div></div>`;

const catsPhone = () => `<div class="relative h-[823px] w-[411px] overflow-hidden bg-[#fafafa]"><div class="grid grid-cols-3 gap-[10px] p-4">${[...CATS, ['Travel', 'travel', '', 8], ['Vue', 'vue'], ['Work', 'work', '', 11]].map(c => tile(c, 'h-[91px] pt-[16px]')).join('')}</div>
<div class="absolute inset-x-0 bottom-0 h-[122px] border-t border-[#e2e2e2] bg-[#f0f0f0] pt-[11px]"><div class="flex h-10 justify-between px-4"><div class="flex items-center rounded-[3px] border px-4 text-[16px] shadow-sm ${LT.btn} ${LT.mut}">New category</div>${select(LT, `<span class="-ml-1 mr-3">${ic('tune', 'size-5')}</span>Options`, 'up')}</div>${nav(LT, 'Cats')}</div>
<div class="absolute top-[557px] left-[193px] h-[147px] w-[202px] rounded-[3px] border border-[#bbbbbb] bg-[#d9d9d9] p-[3px] shadow-lg"><div class="flex h-full flex-col bg-[#fafafa] text-[14px] text-[#333]"><div class="flex h-[47px] items-center gap-[13px] border-b border-[#bbb] pl-[19px]"><span class="text-[#666]">${ic('logout', 'size-[18px]')}</span>Sign Out</div><div class="flex h-[47px] items-center gap-[13px] pl-[19px]"><span class="text-[#666]">${ic('palette', 'size-[18px]')}</span>Change theme</div><div class="flex h-[45px] items-center gap-[13px] pl-[19px]"><span class="text-[#666]">${ic('cats', 'size-[18px]')}</span>Last cats in TrnForm</div></div></div></div>`;

const formHead = (w, v, wc, c, cc, ci, wt, ct, bd = 'bg-[#e4e4e4]', h = 'h-[82px]') => `<div class="relative grid grid-cols-2 text-[18px] text-[#fafafa] ${h}"><div class="relative pt-[17px] pl-5 ${C[wc]}"><div class="h-6 leading-6">${w}</div><div class="flex h-6 items-center">${M(v, 'text-[18px]', 'text-[13px]')}</div><div class="absolute -top-6 right-4 flex size-12 items-center justify-center rounded-[3px] ${bd} ${wt}">${ic('wallets', 'size-6')}</div></div><div class="relative flex items-center pl-5 ${C[cc]}">${c}<div class="absolute -top-6 right-4 flex size-12 items-center justify-center rounded-full ${bd} ${ct}">${ic(ci, 'size-6')}</div></div></div>`;
const calc = (t, o) => `<div class="absolute inset-x-0 bottom-0 h-[493px]">${o.head}
<div class="flex h-[98px] flex-col items-end px-4 pt-[17px] ${o.body} ${o.col}"><div class="text-[16px] leading-5">${o.kind}</div><div class="mt-[7px] flex h-[38px] items-center">${U(o.sum, 'text-[40px] leading-[38px] font-light tracking-[.1em]', o.sw)}</div></div>
<div class="grid grid-cols-5 grid-rows-[57px_repeat(4,64px)] gap-0 border-t ${o.body} ${o.ln}"><div class="col-span-4 flex items-center justify-center border-r border-b text-[16px] ${o.dt} ${o.ln}">${o.date}</div><div class="flex items-center justify-center border-b ${t.mut} ${o.ln}">${ic('comment', 'size-5')}</div>
${'+789X-456*123/C0<D'.split('').map(k => k === 'X' ? `<div class="row-span-3 flex items-center justify-center text-white ${o.ok}">${ic('check', 'size-10')}</div>` : k === 'D' ? `<div class="flex items-center justify-center ${o.op} ${o.kt}">${ic('download', 'size-5')}</div>` : `<div class="flex items-center justify-center border-r border-b text-[22px] ${o.ln} ${o.kt} ${'+-*/'.includes(k) ? o.op : 'C<'.includes(k) ? o.del : ''}">${k === '<' ? ic('left', 'size-[17px]') : k}</div>`).join('')}</div></div>`;

const FT = [['Batteries', 'lime', 'batteries'], ['Cafe', 'brick', 'cafe'], ['Fine', 'auto', 'fine'], ['Food', 'brick', 'food'], ['Gas', 'auto', 'gas'], ['Phone', 'service', 'phone'], ['Service', 'auto', 'gavel'], ['Йога', 'red', 'yoga'], ['Налог-<br>Продажа', 'household', 'house'], ['Отель', 'deep', 'plane'], ['Проекты', 'orange', 'work'], ['Ремонт', 'ink', 'wand']];
const form = o => `<div class="h-[931px] w-[400px] border ${o.frame}">${o.head}
<div class="flex h-[56px] border-b text-[16px] ${o.dbg} ${o.ln} ${o.mut}"><div class="flex flex-1 items-center justify-center border-r ${o.ln}">${o.date}</div><div class="flex w-[79px] items-center justify-center">${ic('comment', 'size-5')}</div></div>
<div class="h-[128px] border-b px-[26px] ${o.ln}"><div class="flex items-center justify-between pt-[17px] leading-6 ${o.mut}">${[['EXPENSES', 73], ['INCOMES', 66], ['TRANSFER', 72]].map(([l, w]) => `<span class="flex h-6 items-center ${l === o.on ? o.col : ''}">${U(l, 'text-[18px] leading-6 tracking-[.1em]', w)}</span>`).join('')}</div><div class="mt-[11px] flex h-[44px] items-center justify-end ${o.col}">${U(o.sum, 'text-[36px] leading-[44px] font-light tracking-[.1em]', 57)}<span class="h-full w-px bg-current"></span></div></div>
<div class="px-[26px] pt-[26px]"><div class="flex h-[52px] items-center justify-center rounded-[3px] bg-[#293d76] text-[#f5f5f5]">${U('CREATE TRANSACTION', 'text-[16px] tracking-[.17em]', 158)}</div>
<div class="mt-[24px] h-9 ${o.mut}">${U('WALLETS', 'text-[18px] leading-[22px] tracking-[.1em]', 62)}</div>
<div class="grid grid-cols-3 gap-[10px]">${WAL.map(([n, v, c]) => `<div class="flex h-[68px] flex-col items-end rounded-[3px] pt-[13px] pr-[16px] text-[#f0f0f0] ${C[c]}"><div class="h-5 text-[14px] leading-5">${n}</div><div class="flex h-[22px] items-center">${M(v, 'text-[17px]', 'text-[13px]')}</div></div>`).join('')}</div>
<div class="mt-[38px] h-9 ${o.mut}">${U('CATEGORIES', 'text-[18px] leading-[22px] tracking-[.1em]', 86)}</div>
<div class="grid grid-cols-3 gap-[10px]">${FT.map((c, k) => k === 8 ? tile(c, 'h-[90px] pt-[10px]', '!mt-1 leading-[15px]') : k > 5 && k < 8 ? tile(c, 'h-[90px] pt-[16px]') : tile(c, 'h-[79px] pt-[11px]')).join('')}</div></div></div>`;

// Wide dark window
const YM = [['2018', [['NOV', 1, 15], ['OCT', 6, 16], ['SEP', 1, 8], ['AUG', 1, 28], ['JUL', 1, 25], ['JUN', 14, 27], ['MAY', 29, 19], ['APR', 34, 31], ['MAR', 21, 25], ['FEB', 34, 26], ['JAN', 79, 19]]], ['2017', [['DEC', 51, 54], ['NOV', 40, 23], ['OCT', 1, 7], ['SEP', 1, 24], ['AUG', 10, 22], ['JUL', 18, 12], ['JUN', 17, 28], ['MAY', 34, 13], ['APR', 60, 24], ['MAR', 2, 18], ['FEB', 2, 11], ['JAN', 8, 12]]]];
const drow = (r, o = {}) => row(DK, r, { h: 'h-[50px] px-5', box: 'size-8 mr-[26px]', body: 'h-8', num: 'text-[17px]', ...o });
const trn = (d, v) => `<div class="flex h-[37px] items-center pl-[20px] pr-5 text-[15px] text-[#8c8c8c]"><span class="w-[58px]">${d}</span><span class="mr-1.5 flex h-[18px] w-[18px] items-center justify-center rounded-[2px] bg-[#7b26a0] text-[10px] text-white">Ti</span><span class="flex-1">Tinkoff Rub</span><span class="${RED}">${M(v, 'text-[16px]', 'text-[14px]')}</span></div>`;
const stat3 = (b, l, w, c, v, a) => `<div class="h-[54px] w-[279px] border-l-2 pl-[19px] ${b}"><div class="flex h-[30px] items-center justify-between ${c}">${U(l, 'text-[21px] tracking-[.08em]', w)}${M(v, 'text-[22px]', 'text-[16px]')}</div><div class="flex h-[26px] items-center justify-between text-[#9a9a9a]"><span class="flex items-center gap-1.5">${ic('avg', 'size-[14px]')}${U('AVERAGE', 'text-[16px] font-medium tracking-[.08em]', 60)}</span>${M(a, 'text-[16px] font-medium', 'text-[14px]')}</div></div>`;
const desktopDark = () => `<div class="relative flex h-[1050px] w-[1505px] overflow-hidden bg-[#111111]">
${sidebar(DK, { side: 'bg-[#1d1d1d]', tot: 'bg-[#181818]', ln: 'border-[#101010]', ln2: 'border-[#2a2a2a]', on: 'stat', a: '41 275', b: '11 732', list: wl(['26 867', '291', '4 583', '9 534', '28', '28']) })}
<div class="w-[1174px]"><div class="relative flex h-[179px] gap-10 border-b border-[#080808] pl-[65px]">${YM.map(([y, ms]) => `<div class="relative flex h-full"><div class="absolute inset-x-0 top-[18px] z-10 flex justify-center pl-5 text-[#8c8c8c]">${U(y, 'text-[18px] leading-6 font-normal tracking-[.1em]', 35)}</div>${ms.map(([m, g, r]) => `<div class="mx-px flex w-[40px] flex-col items-center pt-[61px] ${y + m === '2018JUN' ? 'bg-[#191919] -mb-px' : ''}"><div class="flex h-20 shrink-0 items-end gap-[3px]"><div class="w-1.5 bg-[#33aa30]" style="height:${g}px"></div><div class="w-1.5 bg-[#f8233b]" style="height:${r}px"></div></div><div class="mt-1 flex h-4 items-center text-[#777]">${U(m, 'text-[13px] leading-4 font-normal tracking-[.1em]', 20)}</div></div>`).join('')}</div>`).join('')}<div class="absolute top-[122px] left-[1070px]">${circ(DK, 'dots', 'size-[13px]')}</div></div>
<div class="h-[172px] border-b border-[#080808] bg-[#181818] px-[65px] pt-[26px]"><div class="relative flex h-10 items-center justify-between"><div class="flex items-center text-[#9a9a9a]">${U('JUNE 2018', 'text-[27px] tracking-[.06em] font-normal', 120)}</div><div class="absolute left-[395px] flex">${circ(DK, 'left')}<div class="ml-10 flex gap-4">${circ(DK, 'history', 'size-[17px]')}${circ(DK, 'dots', 'size-[13px]')}</div><div class="ml-10">${circ(DK, 'right')}</div></div>${select(DK, 'Month')}</div>
<div class="mt-[26px] flex justify-between">${stat3('border-[#6b1a25]', 'EXPENSES', 92, RED, '79 465', '63 132')}${stat3('border-[#2a2a2a]', 'TOTAL', 53, 'text-[#dedede]', '−36 443', '−2 740')}${stat3('border-[#236b22]', 'INCOMES', 84, GRN, '43 022', '60 391')}</div></div>
<div class="flex justify-between px-[65px] pt-[41px]"><div class="w-[467px]">${chart(DK, [['26k', 80, 'sport'], ['20k', 62, 'groceries'], ['7.0k', 21, 'electronics'], ['6.5k', 20, 'personal2', 'personal'], ['6.1k', 18, 'travel'], ['4.6k', 14, 'homepay'], ['3.9k', 12, 'auto'], ['2.3k', 7, 'friends'], ['1.4k', 4, 'fun'], ['973', 3, 'service'], ['270', 1, 'health']], 'h-[162px] pl-[22px] border-l-2 border-[#54151e]', 'h-[110px]')}
<div class="mt-4 border border-[#2c2c2c] bg-[#181818]"><div class="border-b border-black bg-[#242424] py-[7px]">${drow(['Sport', '26 200', 100, 'sport'], { on: 1 })}</div><div class="border-b border-black/40 py-2">${drow(['Rollers', '15 000', 57, 'sport', 'rollers'], { thin: 1 })}</div><div class="bg-[#1c1c1c]"><div class="border-b border-black/30 py-[7px]">${drow(['Other', '11 200', 43, 'sport', 'soccer'], { thin: 1, on: 1 })}</div>${trn('26 J...', '11 000')}${trn('07 J...', '200')}</div></div>
<div class="pt-2">${[['Groceries', '19 800', 75, 'groceries'], ['Electronics', '7 000', 27, 'electronics'], ['Personal', '6 500', 25, 'personal2', 'personal'], ['Travel', '6 100', 23, 'travel']].map(r => drow(r)).join('')}</div></div>
<div class="w-[466px]">${chart(DK, [['38k', 80, 'work'], ['3.0k', 6, 'electronics'], ['1.5k', 3, 'cards'], ['300', 1, 'travel']], 'h-[162px] pl-[22px] border-l-2 border-[#1b451a]', 'h-[110px]')}
<div class="pt-6">${drow(['Work', '38 200', 100, 'work'])}${drow(['Electronics', '3 000', 8, 'electronics'])}</div>
<div class="mt-2 border border-[#2c2c2c] bg-[#181818]"><div class="border-b border-black bg-[#242424] py-[7px]">${drow(['Cards', '1 522', 4, 'cards'], { on: 1 })}</div><div class="py-1">${drow(['RocketBank', '800', 2, 'cards', 'wallets'], { thin: 1, h: 'h-14 px-5' })}${drow(['Tinkoff', '722', 2, 'cards'], { thin: 1, h: 'h-14 px-5' })}</div></div><div class="pt-2">${drow(['Travel', '300', 1, 'travel'])}</div></div></div></div>
<div class="h-full w-[7px] rounded-full bg-[#808080]"></div></div>`;

// Day cards of the dimmed transactions screen
const day = (d, n, dt, v, i, h = 'h-[125px]') => `<div class="w-[336px] shrink-0 bg-[#0a0a0a] ${h}"><div class="flex h-[62px] items-center gap-2 border-b border-black bg-[#0f0f0f] px-4 text-[#3a3a3a]">${U(d, 'text-[34px] font-light', 38)}<div class="text-[14px] leading-[16px]">${n}<br>Oct 2018</div></div><div class="flex h-[62px] items-center px-4 text-[14px] text-[#444]"><div class="relative mr-2 flex w-[48px]"><div class="flex size-7 items-center justify-center rounded-full bg-[#3c1309] text-[#555]">${ic('food', 'size-4')}</div><div class="-ml-1.5 mt-3 flex size-5 items-center justify-center rounded-[2px] ${i === 'Ti' ? 'bg-[#270c33]' : 'bg-[#45150a]'} text-[10px] text-[#666]">${i}</div></div>${dt}<span class="ml-4">Food</span><span class="ml-auto text-[#6a0f1b]">${M(v, 'text-[17px]', 'text-[13px]')}</span></div></div>`;

const at = (pos, html, sh = 'shadow-[0_0_14px_rgba(0,0,0,.65)]') => `<div class="absolute ${pos} ${sh}">${html}</div>`;
document.getElementById('root').innerHTML = [
  at('left-[822px] top-[1050px] w-[1501px] h-[1050px] overflow-hidden bg-[#060606]', `
    <div class="absolute left-0 top-0 h-full w-[38px] bg-[#0b0b0b]"></div><div class="absolute top-[408px] left-0 text-[14px] whitespace-nowrap text-[#2a2a2a]">w all wallets</div>
    <div class="absolute right-[471px] top-[18px] flex text-[#222]">${U('AUGUST', 'text-[18px] tracking-[.06em]', 56)}</div><div class="absolute left-[1185px] top-[18px] text-[#222]">${U('JULY', 'text-[18px] tracking-[.08em]', 34)}</div>
    <div class="absolute left-[1044px] top-[111px] h-[30px] w-1.5 bg-[#5a0d16]"></div><div class="absolute left-[1040px] top-[146px] text-[11px] text-[#333]">32</div>
    <div class="absolute left-[1259px] top-[62px] h-[40px] w-1.5 bg-[#5a0d16]"></div>
    <div class="absolute left-[449px] top-[177px] h-[241px] w-[650px] border-y border-black bg-[#0a0a0a]"></div>
    <div class="absolute left-[449px] top-[402px] h-[21px] w-[650px] bg-[#0c0c0c]"></div><div class="absolute left-[440px] top-[402px] h-[6px] w-[35px] rounded-r bg-[#5b2d12]"></div>
    <div class="absolute left-[346px] top-[546px] grid grid-cols-[repeat(4,336px)] gap-x-[18px] gap-y-[17px]">${day('26', 'Friday', '26 Oct', '498', 'Ti')}${day('26', 'Friday', '26 Oct', '708', 'Ti')}${day('25', 'Thursday', '25 Oct', '300', 'Ti')}<div></div>${day('24', 'Wednesday', '24 Oct', '532', 'Ti', 'h-[185px]')}${day('23', 'Tuesday', '23 Oct', '158', 'Ro', 'h-[185px]')}${day('22', 'Monday', '22 Oct', '220', 'Ro', 'h-[185px]')}</div>
    <div class="absolute left-[1454px] top-0 h-full w-[6px] bg-[#191919]"></div>`, ''),
  at('left-[783px] top-0', desktopLight(), ''),
  at('left-[400px] top-[823px]', `<div class="relative flex h-[454px] w-[30px] flex-col gap-5 bg-[#777]"><div class="h-[73px] bg-[#0b4468]"></div><div class="h-[79px] bg-[#7a4015]"></div><div class="h-[79px] bg-[#2d311a]"></div><div class="h-[79px] bg-[#722810]"></div><div class="h-[64px] bg-[#35501f] pl-3 text-[17px] text-[#7d7d7d]">1</div></div>`, ''),
  at('left-[372px] top-0', editWallet()),
  at('left-[421px] top-[490px] w-[1379px] h-[962px]', `<div class="h-[1050px] w-[1505px] origin-top-left scale-[.9163]">${desktopDark()}</div>`),
  at('left-0 top-[824px]', colorPicker()),
  `<div class="absolute left-[411px] top-[1452px] h-[648px] w-[411px] overflow-hidden"><div class="absolute bottom-0 left-0">${statDark()}<div class="absolute inset-0 bg-black/75"></div>${calc(DK, { head: formHead('WebMoney', '5 216', 'pink', 'Develop', 'orange', 'develop', 'text-[#c21d5b]', 'text-[#fe8022]', 'bg-[#dcdcdc]'), body: 'bg-[#1d1d1d]', col: GRN, kind: 'Incomes', sum: '7 895', sw: 94, ln: 'border-[#0f0f0f]', dt: 'text-[#cfcfcf]', date: 'Yesterday Tue, 27 Nov', ok: 'bg-[#33aa30]', op: 'bg-[#191919]', kt: 'text-[#9a9a9a]', del: 'bg-[#3c181b]' })}</div></div>`,
  at('left-[1438px] top-[865px]', `<div class="relative">${statLight()}<div class="absolute inset-0 bg-black/60"></div>${calc(LT, { head: formHead('RocketBank', '5 114', 'tomato', 'Gas', 'homepay', 'fire', 'text-[#d84221]', 'text-[#303f9b]'), body: 'bg-[#fafafa]', col: RED, kind: 'Expense', sum: '854', sw: 63, ln: 'border-[#e6e6e6]', dt: 'text-[#555555]', date: 'Today Wed, 28 Nov', ok: 'bg-[#f8233b]', op: 'bg-[#f4f4f4]', kt: 'text-[#777777]', del: 'bg-[#fcd3d3]' })}</div>`),
  at('left-[860px] top-[1277px]', statLight()),
  at('left-0 top-0', statDark()),
  at('left-0 top-[1277px]', catsPhone()),
  at('left-[1895px] top-[105px]', form({ frame: 'border-[#e0e0e0] bg-[#fafafa]', head: formHead('Yandex', '28', 'amber', 'Animals', 'friends', 'cat', 'text-[#fbc03f]', 'text-[#7b26a0]', 'bg-[#e6e6e6]', 'h-[81px]'), dbg: 'bg-[#efefef]', ln: 'border-[#e2e2e2]', mut: 'text-[#707070]', date: 'Today Wed, 28 Nov', on: 'EXPENSES', col: RED, sum: '467' }), ''),
  at('left-[1895px] top-[1155px]', form({ frame: 'border-[#1d1d1d] bg-[#1d1d1d]', head: formHead('Tinkoff Rub', '22 447', 'friends', 'Develop', 'orange', 'develop', 'text-[#7b26a0]', 'text-[#fe8022]', 'bg-[#dcdcdc]', 'h-[81px]'), dbg: 'bg-[#222222]', ln: 'border-[#0f0f0f]', mut: 'text-[#8c8c8c]', date: 'Today Wed, 28 Nov', on: 'INCOMES', col: GRN, sum: '999' }), ''),
].join('');

// Squeeze display text and give back the space it no longer needs; re-run when its size changes.
const fit = e => {
  const n = e.offsetWidth;
  if (!n) return;
  const w = +e.dataset.w || n * .79;
  e.style.transform = `scaleX(${w / n})`;
  e.style.marginRight = `${w - n}px`;
};
const ro = new ResizeObserver(list => list.forEach(x => fit(x.target)));
document.querySelectorAll('.nar').forEach(e => { fit(e); ro.observe(e); });
addEventListener('load', () => document.querySelectorAll('.nar').forEach(fit));
</script>
</body>
</html>
